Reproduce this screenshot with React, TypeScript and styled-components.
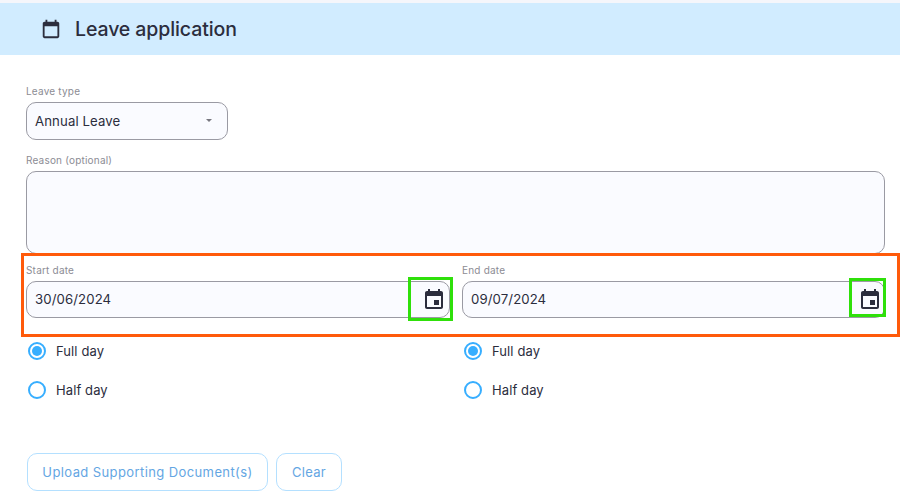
import React from "react";
import styled, { createGlobalStyle } from "styled-components";

const Global = createGlobalStyle`
  html, body { margin: 0; padding: 0; background: #fff; }
  body { font-family: Inter, "Noto Sans", sans-serif; color: #2b2d3d; }
  * { box-sizing: border-box; }
`;

const Page = styled.div`
  position: relative;
  width: 900px;
  height: 504px;
  overflow: hidden;
  padding-top: 3px;
  background: linear-gradient(#f5f6fb 0, #f5f6fb 3px, #fff 3px);
`;

const Header = styled.header`
  height: 52px;
  background: #d1ecff;
  display: flex;
  align-items: center;
  gap: 13px;
  padding-left: 40px;
`;

const Title = styled.h1`
  margin: 0;
  font-size: 19.5px;
  font-weight: 500;
  letter-spacing: -0.1px;
  color: #2b2d3d;
`;

const Form = styled.form`
  padding: 31px 15px 0 26px;
  display: flex;
  flex-direction: column;
`;

const Field = styled.div<{ $width?: number }>`
  display: flex;
  flex-direction: column;
  ${(p) => (p.$width ? `width: ${p.$width}px;` : "")}
`;

const Label = styled.label`
  font-size: 10px;
  line-height: 10px;
  height: 12px;
  margin-bottom: 4px;
  letter-spacing: 0.2px;
  color: #8c8c94;
`;

const Box = styled.div<{ $height: number; $right?: number; $lift?: number }>`
  height: ${(p) => p.$height}px;
  background: #fafbff;
  border: 1px solid #9a9aa3;
  border-radius: 10px;
  display: flex;
  align-items: center;
  justify-content: space-between;
  padding: 0 ${(p) => p.$right ?? 15}px ${(p) => p.$lift ?? 1}px 8px;
  font-size: 13.2px;
  letter-spacing: 0.1px;
  color: #2b2d3d;
`;

const SelectArrow = styled.span`
  width: 0;
  height: 0;
  border-left: 3.5px solid transparent;
  border-right: 3.5px solid transparent;
  border-top: 3.5px solid #77777f;
`;

const ReasonField = styled(Field)`
  margin-top: 15px;
`;

const DateRow = styled.div`
  display: grid;
  grid-template-columns: 424px 423px;
  column-gap: 12px;
  margin-top: 11px;
`;

const Radios = styled.div`
  display: flex;
  flex-direction: column;
  gap: 21px;
  margin-top: 24px;
  padding-left: 2px;
`;

const RadioRow = styled.div`
  display: flex;
  align-items: center;
  gap: 10px;
  height: 18px;
  font-size: 13px;
  letter-spacing: 0.1px;
  color: #2b2d3d;
`;

const RadioRing = styled.span<{ $on?: boolean }>`
  width: 18px;
  height: 18px;
  border-radius: 50%;
  border: 2px solid #37aeff;
  display: flex;
  align-items: center;
  justify-content: center;
  &::after {
    content: "";
    width: 10px;
    height: 10px;
    border-radius: 50%;
    background: ${(p) => (p.$on ? "#37aeff" : "transparent")};
  }
`;

const Actions = styled.div`
  display: flex;
  gap: 8px;
  margin-top: 54px;
  padding-left: 1px;
`;

const OutlineButton = styled.button<{ $width: number; $spacing: number }>`
  width: ${(p) => p.$width}px;
  height: 38px;
  background: #fff;
  border: 1px solid #b4e0ff;
  border-radius: 10px;
  font-family: inherit;
  font-size: 13px;
  letter-spacing: ${(p) => p.$spacing}px;
  color: #64a6e3;
  padding: 0;
`;

const OrangeFrame = styled.div`
  position: absolute;
  left: 21px;
  top: 253px;
  width: 879px;
  height: 84px;
  border: 3px solid #ff5a0a;
  pointer-events: none;
`;

const GreenFrame = styled.div<{ $left: number; $top: number; $w: number; $h: number }>`
  position: absolute;
  left: ${(p) => p.$left}px;
  top: ${(p) => p.$top}px;
  width: ${(p) => p.$w}px;
  height: ${(p) => p.$h}px;
  border: 3px solid #2fe00a;
  pointer-events: none;
`;

const Cal = ({ size = 24, dot = true }: { size?: number; dot?: boolean }) => (
  <svg width={size} height={size} viewBox="0 0 24 24" fill="#2b2d3d" aria-hidden="true">
    <path d="M19 4h-1V2h-2v2H8V2H6v2H5c-1.11 0-2 .9-2 2v14c0 1.1.89 2 2 2h14c1.1 0 2-.9 2-2V6c0-1.1-.9-2-2-2zm0 16H5V9h14v11z" />
    {dot && <rect x="12" y="13" width="5" height="5" />}
  </svg>
);

const DateField = ({ label, value, right }: { label: string; value: string; right: number }) => (
  <div>
    <Field>
      <Label>{label}</Label>
      <Box $height={37} $right={right} $lift={2}>
        <span>{value}</span>
        <Cal size={24} />
      </Box>
    </Field>
    <Radios>
      <RadioRow>
        <RadioRing $on />
        Full day
      </RadioRow>
      <RadioRow>
        <RadioRing />
        Half day
      </RadioRow>
    </Radios>
  </div>
);

export default function App() {
  return (
    <Page>
      <Global />
      <Header>
        <Cal size={22} dot={false} />
        <Title>Leave application</Title>
      </Header>
      <Form>
        <Field $width={202}>
          <Label>Leave type</Label>
          <Box $height={38}>
            <span>Annual Leave</span>
            <SelectArrow />
          </Box>
        </Field>
        <ReasonField>
          <Label>Reason (optional)</Label>
          <Box $height={83} />
        </ReasonField>
        <DateRow>
          <DateField label="Start date" value="30/06/2024" right={3} />
          <DateField label="End date" value="09/07/2024" right={2} />
        </DateRow>
        <Actions>
          <OutlineButton type="button" $width={241} $spacing={0.4}>Upload Supporting Document(s)</OutlineButton>
          <OutlineButton type="button" $width={66} $spacing={0.25}>Clear</OutlineButton>
        </Actions>
      </Form>
      <OrangeFrame />
      <GreenFrame $left={408} $top={277} $w={45} $h={44} />
      <GreenFrame $left={849} $top={278} $w={37} $h={39} />
    </Page>
  );
}
